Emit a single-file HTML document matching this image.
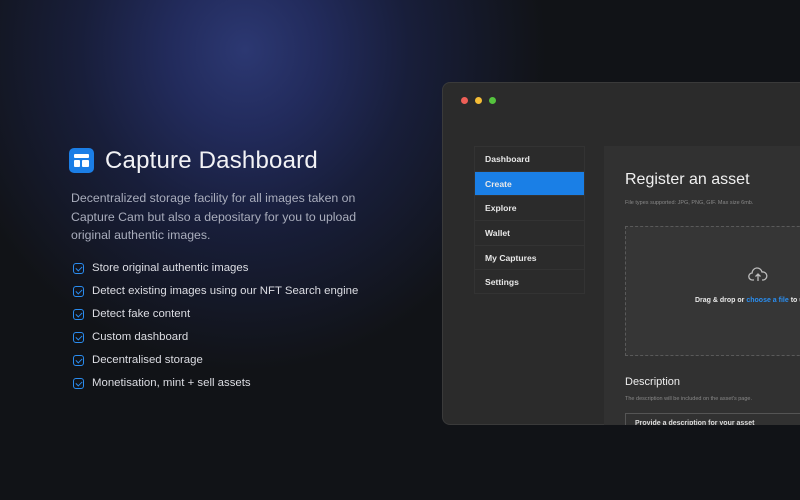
<!DOCTYPE html><html><head><style>
*{margin:0;padding:0;box-sizing:border-box}
body{width:800px;height:500px;overflow:hidden;font-family:"Liberation Sans",sans-serif;background:#111317;position:relative}
.glow{position:absolute;left:0;top:0;width:800px;height:500px;background:radial-gradient(ellipse 300px 320px at 245px 50px,#2c3872 0%,#222b5c 25%,#181e3a 55%,rgba(17,19,23,0) 100%)}
.abs{position:absolute}
h1{position:absolute;left:105px;top:147px;font-size:24px;font-weight:400;color:#f2f2f5;letter-spacing:.2px}
.logo{position:absolute;left:69px;top:148px;width:25px;height:25px;border-radius:5px;background:#1b7ee6}
.desc{position:absolute;left:71px;top:189px;width:300px;font-size:12.3px;line-height:18.5px;color:#a9adbc}
.li{position:absolute;left:73px;font-size:11.4px;color:#dcdde3}
.li i{position:absolute;left:0;top:1px;width:11px;height:11px;border:1.5px solid #2a8cf0;border-radius:3px}
.li i:after{content:"";position:absolute;left:2.5px;top:0.5px;width:3px;height:5px;border-right:1.5px solid #2a8cf0;border-bottom:1.5px solid #2a8cf0;transform:rotate(45deg)}
.li span{position:absolute;left:19px;top:0;white-space:nowrap}
.win{position:absolute;left:442px;top:82px;width:370px;height:343px;background:#2b2b2b;border-radius:8px;border:1px solid #3a3a3a}
.dot{position:absolute;top:14px;width:7px;height:7px;border-radius:50%}
.side{position:absolute;left:31px;top:63px;width:111px;height:148px;border:1px solid #333}
.side div{height:24.7px;line-height:24.7px;padding-left:10px;font-size:8.6px;font-weight:bold;color:#e8e8e8;border-bottom:1px solid #333}
.main{position:absolute;left:161px;top:63px;width:220px;height:290px;background:#313131}
</style></head><body>
<div class="glow"></div>
<div class="logo"><div class="abs" style="left:5px;top:6px;width:15px;height:4px;background:#fff;border-radius:1px"></div><div class="abs" style="left:5px;top:12px;width:6px;height:7px;background:#fff;border-radius:1px"></div><div class="abs" style="left:13px;top:12px;width:7px;height:7px;background:#fff;border-radius:1px"></div></div>
<h1>Capture Dashboard</h1>
<div class="desc">Decentralized storage facility for all images taken on Capture Cam but also a depositary for you to upload original authentic images.</div>
<div class="li" style="top:262px"><i></i><span>Store original authentic images</span></div>
<div class="li" style="top:285px"><i></i><span>Detect existing images using our NFT Search engine</span></div>
<div class="li" style="top:308px"><i></i><span>Detect fake content</span></div>
<div class="li" style="top:331px"><i></i><span>Custom dashboard</span></div>
<div class="li" style="top:354px"><i></i><span>Decentralised storage</span></div>
<div class="li" style="top:377px"><i></i><span>Monetisation, mint + sell assets</span></div>
<div class="win">
<div class="dot" style="left:18px;background:#ee5f57"></div><div class="dot" style="left:32px;background:#f5bd36"></div><div class="dot" style="left:46px;background:#55c33e"></div>
<div class="side"><div>Dashboard</div><div style="background:#1a7fe6">Create</div><div>Explore</div><div>Wallet</div><div>My Captures</div><div style="border:0">Settings</div></div>
<div class="main">
<div class="abs" style="left:21px;top:25px;font-size:16px;color:#f0f0f0;white-space:nowrap">Register an asset</div>
<div class="abs" style="left:21px;top:54px;font-size:5.5px;color:#888;white-space:nowrap">File types supported: JPG, PNG, GIF. Max size 6mb.</div>
<div class="abs" style="left:21px;top:80px;width:200px;height:130px;border:1px dashed #5a5a5a;background:#363636">
<svg class="abs" style="left:122px;top:40px" width="20" height="16" viewBox="0 0 20 16"><path d="M6 13H4.5a3.5 3.5 0 0 1-.4-7A5 5 0 0 1 14 5a3.5 3.5 0 0 1 1.5 8H14M10 14V7M7.5 9.5 10 7l2.5 2.5" fill="none" stroke="#bbb" stroke-width="1.3"/></svg>
<div class="abs" style="left:69px;top:70px;font-size:7px;font-weight:bold;color:#e8e8e8;white-space:nowrap">Drag &amp; drop or <span style="color:#2a8ef0">choose a file</span> to upload</div></div>
<div class="abs" style="left:21px;top:230px;font-size:11px;color:#eee">Description</div>
<div class="abs" style="left:21px;top:250px;font-size:5.5px;color:#888;white-space:nowrap">The description will be included on the asset's page.</div>
<div class="abs" style="left:21px;top:267px;width:200px;height:30px;border:1px solid #555;padding:6px 9px;font-size:7px;font-weight:bold;color:#ddd;white-space:nowrap">Provide a description for your asset</div>
</div>
</div>
<div class="abs" style="left:442px;top:425px;width:358px;height:75px;background:#111317"></div>
</body></html>
